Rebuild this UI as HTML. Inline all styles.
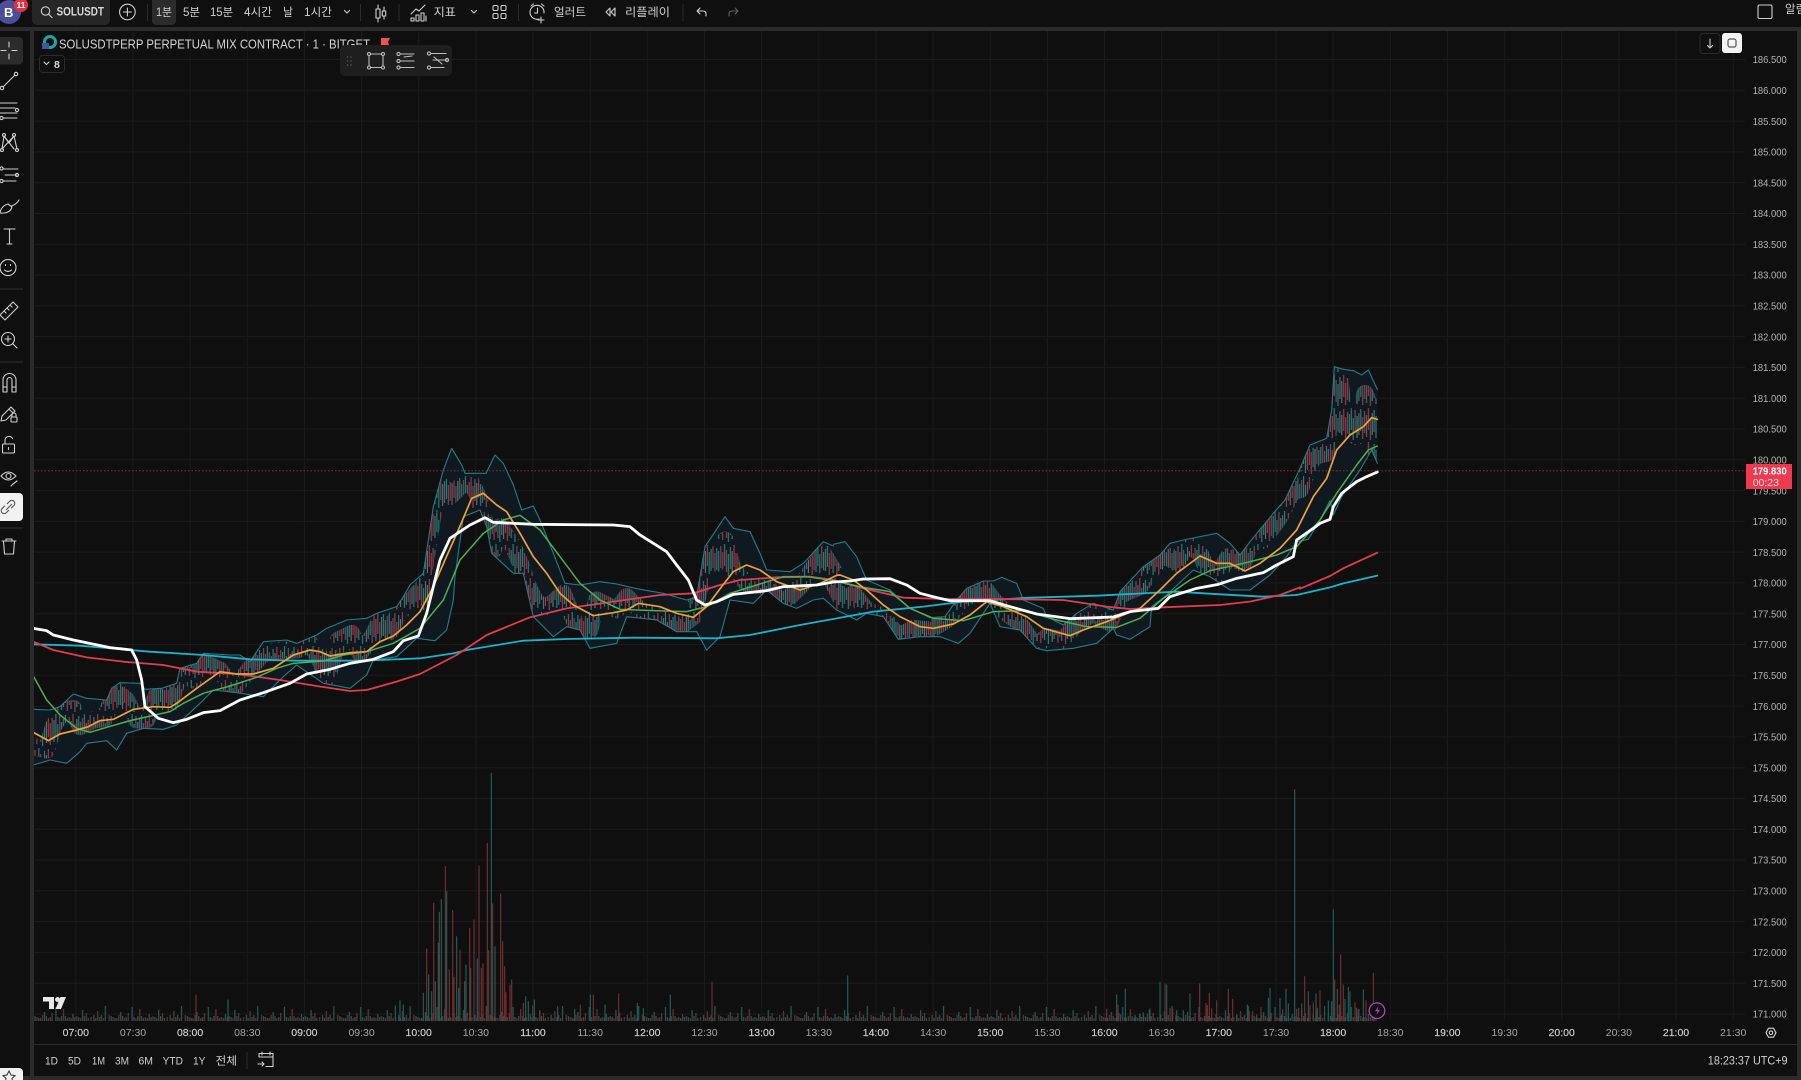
<!DOCTYPE html>
<html lang="ko"><head><meta charset="utf-8"><title>SOLUSDT</title>
<style>
html,body{margin:0;padding:0;background:#0f0f0f;overflow:hidden}
svg{display:block;filter:blur(.3px);font-family:"Liberation Sans","Noto Sans CJK KR",sans-serif}
.t{fill:#d0d0d0;font-size:11.5px}
.b{fill:#d8d8d8;font-size:11.5px;font-weight:bold}
.p{fill:#b4b4b4;font-size:10.5px}
.h{fill:#cfcfcf;stroke:#cfcfcf;stroke-width:.15px;font-size:10.5px;text-anchor:middle}
.m{fill:#a4a4a4;font-size:10.5px;text-anchor:middle}
.i{fill:none;stroke:#cfcfcf;stroke-width:1.1;stroke-linecap:round;stroke-linejoin:round}
.d{stroke:#2b2b2b;stroke-width:1}
.l polyline,.l path{fill:none;vector-effect:non-scaling-stroke;stroke-linejoin:round;stroke-linecap:round}
</style></head><body>
<svg xmlns="http://www.w3.org/2000/svg" width="1801" height="1080" viewBox="0 0 1801 1080">
<defs>
<clipPath id="band">
<polygon transform="translate(30 600) scale(.33333)" points="10,328 60,330 90,320 130,282 170,295 230,300 245,265 270,248 330,250 345,268 395,265 440,250 450,205 500,190 520,160 600,165 630,165 660,185 700,125 770,120 800,130 860,105 890,85 950,60 1010,55 1040,40 1100,20 1120,-10 1180,-80 1210,-280 1240,-390 1265,-455 1272,-448 1272,0 1250,90 1215,122 1160,115 1100,170 1030,180 1010,225 960,265 880,250 800,195 760,230 700,290 620,278 550,270 510,310 440,375 400,388 340,385 290,400 260,450 230,422 170,430 150,455 110,490 60,480 10,495"/>
<polygon transform="translate(400 430) scale(.33333)" points="160,60 185,105 195,130 240,130 258,130 285,75 310,100 340,165 365,240 400,228 420,270 460,370 495,460 540,465 600,455 650,462 720,478 790,490 860,510 890,500 915,350 975,260 1000,295 1050,305 1080,370 1100,420 1170,425 1210,400 1270,335 1302,348 1302,532 1270,505 1240,510 1190,535 1150,520 1100,480 1060,520 990,510 960,620 920,660 890,605 830,605 770,570 680,560 650,640 570,655 540,600 500,590 460,620 400,560 370,430 340,430 275,370 260,290 240,240 190,260 165,440 160,510"/>
<polygon transform="translate(830 500) scale(.33333)" points="0,135 45,125 80,170 110,240 180,270 240,325 300,353 345,350 380,300 410,265 460,243 490,243 515,232 560,250 580,300 640,325 650,350 700,375 740,340 790,310 850,330 870,275 940,200 990,165 1020,130 1060,120 1160,100 1200,130 1230,165 1260,125 1330,40 1365,0 1412,-95 1412,120 1400,125 1370,170 1320,225 1260,270 1200,270 1140,230 1090,210 1010,285 965,320 960,380 900,418 860,405 850,385 800,430 730,445 650,452 620,445 570,390 510,380 480,310 420,400 385,430 330,410 270,410 205,418 160,350 110,340 80,360 50,345 20,330 0,322"/>
<polygon transform="translate(1300 350) scale(.33333)" points="0,355 30,285 80,265 95,180 103,50 130,58 160,62 185,75 205,60 232,118 232,340 215,300 180,360 125,440 100,495 90,452 60,510 25,568 0,572"/>
</clipPath>
<pattern id="volbase" patternUnits="userSpaceOnUse" x="34" y="997" width="76.2" height="24">
<path fill="none" stroke="#1d5e58" stroke-width="1.2" d="M1 24V19M6.700 24V21M10.500 24V15M16.200 24V20M21.900 24V10M27.600 24V19M33.300 24V21M39 24V17M44.700 24V20M48.500 24V13M54.200 24V21M59.900 24V18M65.600 24V20M71.300 24V9"/>
<path fill="none" stroke="#6e2f31" stroke-width="1.2" d="M2.900 24V20M8.600 24V18M14.300 24V21M18.100 24V16M25.700 24V21M29.500 24V12M35.200 24V20M42.800 24V19M46.600 24V21M52.300 24V16M57 24V20M63.700 24V14M69.400 24V21M75.100 24V18"/>
<path fill="none" stroke="#454a4a" stroke-width="1.2" d="M4.800 24V21M12.400 24V19M23.800 24V20M31.400 24V19M37.100 24V21M40.900 24V20M50.400 24V19M61.800 24V21M67.500 24V18"/>
</pattern>
<!-- vertical candle stripes -->
<pattern id="stripes" patternUnits="userSpaceOnUse" x="34" y="340" width="76.2" height="34">
<path fill="none" stroke="#a63a4c" stroke-width="1.100" d="M1 2V24M2.900 8V30M6.700 6V28M14.300 1V23M16.200 9V31M18.100 4V26M25.700 2V24M33.300 9V31M35.200 3V25M39 0V22M40.900 10V32M48.500 4V26M54.200 6V28M56.100 1V23M58 10V32M63.700 0V22M69.400 2V24M71.300 9V31"/>
<path fill="none" stroke="#20877f" stroke-width="1.100" d="M4.800 0V22M8.600 10V32M10.500 3V25M20 6V28M21.900 0V22M23.800 10V32M29.500 5V27M31.400 1V23M37.100 7V29M44.700 2V24M46.600 8V30M50.400 0V22M52.300 9V31M59.900 3V25M65.600 8V30M67.500 5V27M73.200 4V26M75.100 7V29"/>
<path fill="none" stroke="#6d7374" stroke-width="1.100" d="M12.400 7V29M27.600 8V30M42.800 5V27M61.800 7V29"/>
</pattern>
<mask id="ribbon" maskUnits="userSpaceOnUse" x="30" y="340" width="1360" height="440">
<g class="l" stroke="#fff" stroke-width="17">
<polyline transform="translate(30 600) scale(.33333)" points="10,440 50,450 70,380 100,330 130,325 150,380 190,360 225,355 255,270 290,300 320,360 350,360 380,285 420,315 450,215 490,240 515,185 570,210 610,270 660,205 700,160 760,150 800,150 840,130 870,180 890,240 925,120 965,100 990,160 1030,105 1050,60 1080,95 1110,30 1160,10"/>
<polyline transform="translate(400 430) scale(.33333)" points="0,520 40,480 60,520 80,370 100,250 130,170 150,200 180,170 210,150 235,200 260,300 280,360 300,290 340,350 365,410 385,470 410,520 445,530 490,490 530,590 570,600 590,510 650,540 680,500 720,540 800,570 840,590 880,560 900,470 925,370 950,400 975,330 1000,420 1040,460 1100,470 1150,520 1200,470 1270,370 1300,420"/>
<polyline transform="translate(830 500) scale(.33333)" points="10,250 40,310 70,280 110,330 160,350 205,410 250,385 300,390 350,360 400,300 460,260 490,300 530,340 570,370 615,440 650,410 700,420 740,370 790,340 840,370 870,285 930,260 1000,160 1040,190 1070,130 1110,160 1150,250 1195,170 1240,190 1260,130 1300,120 1350,50 1390,-30"/>
<polyline transform="translate(1300 350) scale(.33333)" points="0,420 40,320 80,310 100,60 120,90 135,230 170,260 195,130 215,180 232,340"/>
</g>
</mask>
</defs>
<rect width="1801" height="1080" fill="#0f0f0f"/>
<path stroke="#1b1b1b" stroke-width="1" fill="none" d="M34 59.500H1745M34 90.300H1745M34 121.100H1745M34 151.900H1745M34 182.700H1745M34 213.500H1745M34 244.200H1745M34 275H1745M34 305.800H1745M34 336.600H1745M34 367.400H1745M34 398.200H1745M34 429H1745M34 459.800H1745M34 490.600H1745M34 521.400H1745M34 552.100H1745M34 582.900H1745M34 613.700H1745M34 644.500H1745M34 675.300H1745M34 706.100H1745M34 736.900H1745M34 767.700H1745M34 798.500H1745M34 829.300H1745M34 860H1745M34 890.800H1745M34 921.600H1745M34 952.400H1745M34 983.200H1745M34 1014H1745M75.800 31V1020M133 31V1020M190.100 31V1020M247.300 31V1020M304.400 31V1020M361.600 31V1020M418.700 31V1020M475.900 31V1020M533 31V1020M590.200 31V1020M647.300 31V1020M704.500 31V1020M761.600 31V1020M818.800 31V1020M875.900 31V1020M933.100 31V1020M990.200 31V1020M1047.400 31V1020M1104.500 31V1020M1161.700 31V1020M1218.800 31V1020M1276 31V1020M1333.100 31V1020M1390.300 31V1020M1447.400 31V1020M1504.600 31V1020M1561.700 31V1020M1618.900 31V1020M1676 31V1020M1733.200 31V1020"/>

<!-- band fill -->
<rect x="30" y="340" width="1360" height="440" fill="#111920" clip-path="url(#band)"/>

<!-- volume -->
<rect x="34" y="997" width="1343" height="24" fill="url(#volbase)"/>
<g class="l">
<path transform="translate(380 760) scale(.33333)" stroke="#1d5e58" stroke-width="1.2" d="M334 782V40M200 782V395M184 782V418M230 782V530M345 782V560M258 782V615M292 782V597M146 782V645M130 782V700M155 782V695M236 782V685M631 782V705M871 782V705M437 782V710M463 782V720M772 782V730M675 782V735M533 782V740M60 782V722M46 782V738M70 782V735M445 782V725M584 782V748M790 782V745"/>
<path transform="translate(380 760) scale(.33333)" stroke="#6e2f31" stroke-width="1.2" d="M322 782V250M297 782V318M196 782V320M161 782V430M218 782V452M362 782V402M338 782V432M282 782V480M269 782V505M140 782V567M240 782V570M368 782V545M304 782V625M309 782V612M326 782V572M208 782V630M222 782V652M374 782V620M395 782V660M390 782V675M378 782V698M640 782V705M716 782V702M601 782V735M458 782V738M430 782V730M480 782V755"/>
<path transform="translate(380 760) scale(.33333)" stroke="#454a4a" stroke-width="1.2" d="M178 782V457M175 782V550M272 782V625M166 782V665M254 782V665"/>
<path transform="translate(1100 940) scale(.33333)" stroke="#1d5e58" stroke-width="1.200" d="M584 243V-450M700 243V-90M180 243V127M200 243V135M76 243V148M50 243V165M270 243V162M510 243V145M505 243V175M540 243V175M558 243V148M565 243V192M625 243V155M605 243V192M648 243V162M685 243V183M695 243V185M712 243V148M735 243V178M745 243V142M750 243V155M790 243V150M442 243V195M150 243V207M130 243V218M120 243V222M105 243V226M230 243V212M250 243V212M410 243V225M470 243V225"/>
<path transform="translate(1100 940) scale(.33333)" stroke="#6e2f31" stroke-width="1.200" d="M722 243V45M614 243V110M704 243V120M820 243V100M385 243V148M398 243V178M299 243V132M328 243V160M318 243V190M350 243V182M195 243V132M20 243V208M54 243V195M730 243V135M718 243V195M660 243V152M640 243V188M630 243V197M596 243V205M590 243V208M765 243V188M798 243V182M483 243V202M525 243V222M458 243V215M448 243V215M210 243V205M218 243V207M335 243V207M322 243V197M142 243V222"/>
<path transform="translate(1100 940) scale(.33333)" stroke="#454a4a" stroke-width="1.200" d="M770 243V205M775 243V210M652 243V205M62 243V225M545 243V225"/>
<path stroke="#1d5e58" stroke-width="1.200" d="M847.700 1021V976M228 1021V1000"/>
<path stroke="#6e2f31" stroke-width="1.200" d="M196 1021V995M712 1021V982"/>
</g>

<!-- bollinger lines -->
<g class="l" stroke="#1c7f8d" stroke-width="1.100">
<polyline transform="translate(30 600) scale(.33333)" points="10,328 60,330 90,320 130,282 170,295 230,300 245,265 270,248 330,250 345,268 395,265 440,250 450,205 500,190 520,160 600,165 630,165 660,185 700,125 770,120 800,130 860,105 890,85 950,60 1010,55 1040,40 1100,20"/>
<polyline transform="translate(400 430) scale(.33333)" points="-10,530 10,500 30,465 70,430 100,230 130,120 155,55 185,105 195,130 240,130 258,130 285,75 310,100 340,165 365,240 400,228 420,270 460,370 495,460 540,465 600,455 650,462 720,478 790,490 860,510 890,500 915,350 975,260 1000,295 1050,305 1080,370 1100,420 1170,425 1210,400 1270,335 1300,348"/>
<polyline transform="translate(830 500) scale(.33333)" points="10,133 45,125 80,170 110,240 180,270 240,325 300,353 345,350 380,300 410,265 460,243 490,243 515,232 560,250 580,300 640,325 650,350 700,375 740,340 790,310 850,330 870,275 940,200 990,165 1020,130 1060,120 1160,100 1200,130 1230,165 1260,125 1330,40 1365,0"/>
<polyline transform="translate(1300 350) scale(.33333)" points="-45,450 0,355 30,285 80,265 95,180 103,50 130,58 160,62 185,75 205,60 232,118"/>
<polyline transform="translate(30 600) scale(.33333)" points="10,495 60,480 110,490 150,455 170,430 230,422 260,450 290,400 340,385 400,388 440,375 510,310 550,270 620,278 700,290 760,230 800,195 880,250 960,265 1010,225 1030,180 1100,170 1160,115 1215,122 1250,90 1270,0"/>
<polyline transform="translate(400 430) scale(.33333)" points="160,510 165,440 190,260 240,240 260,290 275,370 340,430 370,430 400,560 460,620 500,590 540,600 570,655 650,640 680,560 770,570 830,605 890,605 920,660 960,620 990,510 1060,520 1100,480 1150,520 1190,535 1240,510 1270,505 1310,540"/>
<polyline transform="translate(830 500) scale(.33333)" points="20,330 50,345 80,360 110,340 160,350 205,418 270,410 330,410 385,430 420,400 480,310 510,380 570,390 620,445 650,452 730,445 800,430 850,385 860,405 900,418 960,380 965,320 1010,285 1090,210 1140,230 1200,270 1260,270 1320,225 1370,170 1400,125"/>
<polyline transform="translate(1300 350) scale(.33333)" points="-10,575 25,568 60,510 90,452 100,495 125,440 180,360 215,300 232,340"/>
</g>

<!-- candles: vertical stripes masked by the price-path ribbon -->
<g clip-path="url(#band)">
<rect x="34" y="340" width="1343" height="440" fill="url(#stripes)" mask="url(#ribbon)"/>
</g>

<line x1="34" y1="470.700" x2="1746" y2="470.700" stroke="#8f2a36" stroke-width="1" stroke-dasharray="1.500 2"/>

<!-- cyan MA -->
<g class="l" stroke="#18b4cc" stroke-width="1.800">
<polyline transform="translate(30 600) scale(.33333)" points="10,133 150,137 360,155 520,165 660,178 800,182 1000,182 1170,175 1270,160"/>
<polyline transform="translate(400 430) scale(.33333)" points="160,670 200,660 370,632 500,627 700,623 950,625 1050,615 1200,585 1300,567"/>
<polyline transform="translate(830 500) scale(.33333)" points="10,357 130,335 280,320 400,305 600,293 800,287 1040,275 1170,283 1300,290 1400,285"/>
<polyline transform="translate(1300 350) scale(.33333)" points="-10,735 90,712 130,700 232,677"/>
</g>
<!-- red MA -->
<g class="l" stroke="#e23c4e" stroke-width="1.800">
<polyline transform="translate(30 600) scale(.33333)" points="10,125 70,150 170,172 280,185 400,195 500,215 620,222 750,240 860,258 960,273 1010,270 1100,245 1170,222 1280,165"/>
<polyline transform="translate(400 430) scale(.33333)" points="170,675 260,615 390,562 500,535 640,515 780,495 880,490 960,465 1020,450 1130,442 1230,440 1300,450"/>
<polyline transform="translate(830 500) scale(.33333)" points="10,240 100,265 220,293 340,297 500,297 700,300 830,320 900,327 1000,322 1170,315 1260,305 1350,285 1410,262"/>
<polyline transform="translate(1300 350) scale(.33333)" points="0,716 90,678 130,655 232,608"/>
</g>
<!-- green MA -->
<g class="l" stroke="#4caf50" stroke-width="1.500">
<polyline transform="translate(30 600) scale(.33333)" points="10,228 50,300 90,345 140,385 180,397 220,385 300,362 420,335 460,310 520,280 600,258 680,232 740,205 790,190 880,183 940,165 1010,155 1090,130 1170,85 1240,0"/>
<polyline transform="translate(400 430) scale(.33333)" points="130,510 180,390 250,310 310,270 360,256 420,300 480,380 540,460 600,510 660,538 760,542 860,545 920,530 990,490 1070,465 1150,440 1220,440"/>
<polyline transform="translate(830 500) scale(.33333)" points="-70,230 0,240 100,262 180,275 240,325 310,355 400,362 490,335 580,332 680,360 770,380 860,382 930,355 1000,295 1080,240 1140,212 1240,190 1340,165 1400,140"/>
<polyline transform="translate(1300 350) scale(.33333)" points="-10,590 60,510 110,430 170,345 205,300 232,288"/>
</g>
<!-- orange -->
<g class="l" stroke="#f0a030" stroke-width="1.700">
<polyline transform="translate(30 600) scale(.33333)" points="10,397 55,422 90,402 140,390 175,380 210,362 250,358 310,328 370,320 420,322 440,310 500,265 570,215 620,222 670,222 730,205 790,165 840,150 870,155 900,168 960,158 1010,155 1050,125 1090,108 1130,75 1170,35"/>
<polyline transform="translate(400 430) scale(.33333)" points="60,545 100,470 135,390 175,300 215,205 250,190 290,225 320,245 360,310 400,380 440,430 480,490 520,525 580,557 640,548 680,540 715,520 780,530 830,550 880,562 920,530 965,470 1000,425 1040,405 1080,420 1130,455 1200,480 1260,460 1310,436"/>
<polyline transform="translate(830 500) scale(.33333)" points="20,226 30,225 70,240 110,270 160,315 210,350 270,380 310,385 370,372 420,345 470,305 520,320 590,350 640,385 720,407 760,390 830,365 880,345 930,325 990,270 1040,220 1110,168 1160,190 1200,190 1245,213 1290,190 1350,145 1400,90 1445,0"/>
<polyline transform="translate(1300 350) scale(.33333)" points="35,450 40,440 80,385 110,300 150,255 190,230 215,203 232,208"/>
</g>
<!-- white -->
<g class="l" stroke="#ffffff" stroke-width="2.800">
<polyline transform="translate(30 600) scale(.33333)" points="10,85 50,92 70,105 130,120 240,143 305,150 320,180 335,240 345,320 385,355 430,368 470,358 520,338 570,332 630,300 700,278 780,250 830,222 900,208 960,190 1030,178 1090,155 1120,122 1165,108 1190,40"/>
<polyline transform="translate(400 430) scale(.33333)" points="80,550 95,490 120,390 150,325 210,285 255,263 280,277 400,283 640,285 690,290 720,315 800,365 830,405 865,450 890,510 915,525 950,515 1000,493 1100,482 1150,470 1250,465 1300,456"/>
<polyline transform="translate(830 500) scale(.33333)" points="10,246 60,243 100,237 180,236 230,255 270,280 320,293 360,302 480,302 540,320 620,342 720,356 850,351 900,335 985,325 1020,290 1100,265 1165,253 1220,235 1300,218 1340,195 1390,170 1400,120"/>
<polyline transform="translate(1300 350) scale(.33333)" points="-10,570 40,535 60,520 90,508 100,470 125,430 170,395 200,380 232,366"/>
</g>

<!-- top bar -->
<rect x="0" y="0" width="1801" height="27" fill="#0f0f0f"/>
<rect x="0" y="27" width="1801" height="4" fill="#2b2b2b"/>
<circle cx="9" cy="12" r="12" fill="#4a4f9c"/>
<text x="4" y="17" fill="#fff" font-size="13" font-weight="bold">B</text>
<circle cx="21" cy="5" r="7" fill="#e8303c"/>
<text x="21" y="8" fill="#fff" font-size="8.500" font-weight="bold" text-anchor="middle">11</text>
<rect x="32" y="-4" width="78" height="29" rx="5" fill="#262626"/>
<circle cx="45.500" cy="11" r="4.200" class="i"/><path d="M48.600 14.200l3.400 3.400" class="i"/>
<text x="56.500" y="15.500" class="b" font-size="11" textLength="47.500" lengthAdjust="spacingAndGlyphs">SOLUSDT</text>
<circle cx="127.400" cy="12" r="7.800" class="i"/><path d="M127.400 8v8M123.400 12h8" class="i"/>
<line x1="147.500" y1="4" x2="147.500" y2="21" class="d"/>
<rect x="152" y="-4" width="24" height="29" rx="4" fill="#2b2b2b"/>
<text x="156" y="16" class="t" textLength="16" lengthAdjust="spacingAndGlyphs">1분</text>
<text x="183" y="16" class="t" textLength="17" lengthAdjust="spacingAndGlyphs">5분</text>
<text x="210" y="16" class="t" textLength="23" lengthAdjust="spacingAndGlyphs">15분</text>
<text x="244" y="16" class="t" textLength="28" lengthAdjust="spacingAndGlyphs">4시간</text>
<text x="283" y="16" class="t" textLength="10" lengthAdjust="spacingAndGlyphs">날</text>
<text x="304" y="16" class="t" textLength="28" lengthAdjust="spacingAndGlyphs">1시간</text>
<path d="M344.500 10.500l2.500 2.500 2.500-2.500" class="i"/>
<line x1="360.500" y1="4" x2="360.500" y2="21" class="d"/>
<path d="M378 5v4M378 18v4M376 9h4v9h-4zM384 7v4M384 16v3M382.300 11h3.400v5h-3.400z" class="i"/>
<line x1="399" y1="4" x2="399" y2="21" class="d"/>
<path d="M411 14l5-5 3 2 6-6M411 21v-3h3v3zM416 21v-6h3v6zM421 21v-8h3v8zM426 21v-5" class="i" stroke-width="1"/>
<text x="433.600" y="16" class="t" textLength="22.400" lengthAdjust="spacingAndGlyphs">지표</text>
<path d="M471.500 10.500l2.500 2.500 2.500-2.500" class="i"/>
<rect x="493" y="5.500" width="5" height="5" rx="1.300" class="i"/><rect x="501" y="5.500" width="5" height="5" rx="1.300" class="i"/><rect x="493" y="13.500" width="5" height="5" rx="1.300" class="i"/><rect x="501" y="13.500" width="5" height="5" rx="1.300" class="i"/>
<line x1="518.500" y1="4" x2="518.500" y2="21" class="d"/>
<path d="M539 19a7 7 0 1 1 5-6M537.500 8v5h-3M531 6l2.500-2M544 6l-2.500-2M541 17v6M538 20h6" class="i"/>
<text x="554" y="16" class="t" textLength="32" lengthAdjust="spacingAndGlyphs">얼러트</text>
<path d="M610 8l-4 4 4 4zM615 8l-4 4 4 4z" class="i"/>
<text x="625" y="16" class="t" textLength="45" lengthAdjust="spacingAndGlyphs">리플레이</text>
<line x1="683" y1="4" x2="683" y2="21" class="d"/>
<path d="M700 8l-3 3 3 3M697 11h6q3 0 3 3v2" class="i"/>
<path d="M735 8l3 3-3 3M738 11h-6q-3 0-3 3v2" class="i" style="stroke:#5f5f5f"/>
<rect x="1758" y="5" width="14" height="13.500" rx="1.500" class="i"/>
<text x="1785" y="13" class="t">알림</text>

<!-- left toolbar -->
<rect x="0" y="31" width="30" height="1049" fill="#0f0f0f"/>
<rect x="30" y="31" width="4" height="1049" fill="#2b2b2b"/>
<rect x="-4" y="37" width="27" height="27.500" rx="4" fill="#2b2b2b"/>
<path d="M9 42v5M9 54v5M1 50.500h5M12 50.500h5" class="i"/>
<g class="i">
<path d="M3 87l12-12"/><circle cx="2" cy="88" r="1.700"/><circle cx="16" cy="74" r="1.700"/>
<path d="M0 103h17M0 108h15M0 113h17M3 118h14"/><circle cx="17" cy="110" r="1.600"/><circle cx="1.500" cy="118" r="1.600"/>
<path d="M2 149l2-13 5 7 5-7 3 13M4 136l10 13M14 136L2 149"/><circle cx="4" cy="135" r="1.500"/><circle cx="14" cy="135" r="1.500"/><circle cx="2" cy="150" r="1.500"/><circle cx="17" cy="150" r="1.500"/>
<path d="M3 169h15M5 175h12M3 181h13"/><circle cx="1.500" cy="168.500" r="1.600"/><circle cx="17" cy="175" r="1.600"/><circle cx="1.500" cy="181" r="1.600"/>
<path d="M0 213q1-7 8-9l4 3q-2 7-12 6zM11 206q5-1 8-6"/>
<path d="M4 229h11M9.500 229v15M7 244h5"/>
<circle cx="8" cy="267.600" r="8"/><path d="M4.500 270q3.500 3 7 0M5.500 264.500v1M10.500 264.500v1"/>
<path d="M0 315L13 302l5 5L5 320zM4 311l2 2M7 308l2 2M10 305l2 2"/>
<circle cx="8" cy="339" r="6.500"/><path d="M13 344l4 4M8 336v6M5 339h6"/>
<path d="M3 392v-12a6.500 6.500 0 0 1 13 0v12h-4v-12a2.500 2.500 0 0 0-5 0v12zM3 387h4M12 387h4"/>
<path d="M1 421l1-5 9-9 4 4-9 9zM9 409l4 4"/><rect x="11" y="417" width="6" height="5" rx="1"/><path d="M12 417v-2a2 2 0 0 1 4 0v2"/>
<rect x="2.500" y="444" width="12" height="9" rx="1"/><path d="M5 444v-4a4 4 0 0 1 7.500-1.500M8.500 447.500v2"/>
<path d="M1 476q7-8 15 0-8 8-15 0z"/><circle cx="8.500" cy="476" r="2.500"/><path d="M13 484l4-3M11 486l2-2"/>
</g>
<rect x="-4" y="493" width="27" height="28" rx="4" fill="#f2f2f2"/>
<path d="M7 504l3-3a3 3 0 0 1 4.200 4.200l-3 3M9 510l-3 3a3 3 0 0 1-4.200-4.200l3-3M6 510l6-6" fill="none" stroke="#555" stroke-width="1.100"/>
<path d="M0 289h23M0 362h23M0 528h23" stroke="#2f2f2f" stroke-width="1"/>
<path d="M2 541h14M6 541v-2h6v2M3.500 541l1 13h9l1-13" class="i"/>

<!-- legend -->
<circle cx="50" cy="42" r="5.500" fill="none" stroke="#1aa6a6" stroke-width="3"/>
<rect x="42" y="43" width="7" height="6" fill="#3a5a9a"/>
<text x="59" y="48.500" fill="#d4d4d4" font-size="12.500" textLength="311" lengthAdjust="spacingAndGlyphs">SOLUSDTPERP PERPETUAL MIX CONTRACT · 1 · BITGET</text>
<path d="M381 38h9l-2 4 1 3h-8z" fill="#f0524f"/>
<rect x="39.500" y="55.500" width="25" height="17" rx="3" fill="#0f0f0f" stroke="#2b2b2b"/>
<path d="M44 62l2.500 2.500L49 62" class="i"/>
<text x="54" y="68" class="b" style="font-size:10.500px">8</text>
<rect x="340" y="45" width="112" height="31" rx="5" fill="#1e1e1e"/>
<g fill="#555"><circle cx="347.500" cy="57" r=".8"/><circle cx="351" cy="57" r=".8"/><circle cx="347.500" cy="61" r=".8"/><circle cx="351" cy="61" r=".8"/><circle cx="347.500" cy="65" r=".8"/><circle cx="351" cy="65" r=".8"/></g>
<g class="i" style="stroke:#bdbdbd">
<rect x="369" y="54" width="14" height="13.500"/><circle cx="369" cy="54" r="1.500" fill="#1e1e1e"/><circle cx="383" cy="54" r="1.500" fill="#1e1e1e"/><circle cx="369" cy="67.500" r="1.500" fill="#1e1e1e"/><circle cx="383" cy="67.500" r="1.500" fill="#1e1e1e"/>
<path d="M400 54h14M400 61h14M400 67.500h14M404 57l8-1"/><circle cx="398.500" cy="54" r="1.600"/><circle cx="398.500" cy="61" r="1.600"/><circle cx="398.500" cy="67.500" r="1.600"/>
<path d="M431 53.500h15M433 60h14M431 67.500h13M434 57l8 7"/><circle cx="429" cy="53.500" r="1.600"/><circle cx="447" cy="60" r="1.600"/><circle cx="429" cy="67.500" r="1.600"/>
</g>
<rect x="1700" y="33.500" width="20" height="20" rx="3" fill="#0f0f0f" stroke="#2b2b2b"/>
<path d="M1710 39v9M1707.500 45.500l2.500 2.500 2.500-2.500" class="i"/>
<rect x="1722" y="33" width="20" height="20" rx="3" fill="#f4f4f4"/>
<path d="M1728 41a2 2 0 0 1 2-2h4a2 2 0 0 1 2 2v4a2 2 0 0 1-2 2h-4a2 2 0 0 1-2-2z" fill="none" stroke="#555" stroke-width="1.200"/>

<!-- price axis -->
<text class="p" x="1752.700" y="63.200" textLength="34" lengthAdjust="spacingAndGlyphs">186.500</text>
<text class="p" x="1752.700" y="94" textLength="34" lengthAdjust="spacingAndGlyphs">186.000</text>
<text class="p" x="1752.700" y="124.800" textLength="34" lengthAdjust="spacingAndGlyphs">185.500</text>
<text class="p" x="1752.700" y="155.600" textLength="34" lengthAdjust="spacingAndGlyphs">185.000</text>
<text class="p" x="1752.700" y="186.400" textLength="34" lengthAdjust="spacingAndGlyphs">184.500</text>
<text class="p" x="1752.700" y="217.200" textLength="34" lengthAdjust="spacingAndGlyphs">184.000</text>
<text class="p" x="1752.700" y="247.900" textLength="34" lengthAdjust="spacingAndGlyphs">183.500</text>
<text class="p" x="1752.700" y="278.700" textLength="34" lengthAdjust="spacingAndGlyphs">183.000</text>
<text class="p" x="1752.700" y="309.500" textLength="34" lengthAdjust="spacingAndGlyphs">182.500</text>
<text class="p" x="1752.700" y="340.300" textLength="34" lengthAdjust="spacingAndGlyphs">182.000</text>
<text class="p" x="1752.700" y="371.100" textLength="34" lengthAdjust="spacingAndGlyphs">181.500</text>
<text class="p" x="1752.700" y="401.900" textLength="34" lengthAdjust="spacingAndGlyphs">181.000</text>
<text class="p" x="1752.700" y="432.700" textLength="34" lengthAdjust="spacingAndGlyphs">180.500</text>
<text class="p" x="1752.700" y="463.500" textLength="34" lengthAdjust="spacingAndGlyphs">180.000</text>
<text class="p" x="1752.700" y="494.300" textLength="34" lengthAdjust="spacingAndGlyphs">179.500</text>
<text class="p" x="1752.700" y="525.100" textLength="34" lengthAdjust="spacingAndGlyphs">179.000</text>
<text class="p" x="1752.700" y="555.800" textLength="34" lengthAdjust="spacingAndGlyphs">178.500</text>
<text class="p" x="1752.700" y="586.600" textLength="34" lengthAdjust="spacingAndGlyphs">178.000</text>
<text class="p" x="1752.700" y="617.400" textLength="34" lengthAdjust="spacingAndGlyphs">177.500</text>
<text class="p" x="1752.700" y="648.200" textLength="34" lengthAdjust="spacingAndGlyphs">177.000</text>
<text class="p" x="1752.700" y="679" textLength="34" lengthAdjust="spacingAndGlyphs">176.500</text>
<text class="p" x="1752.700" y="709.800" textLength="34" lengthAdjust="spacingAndGlyphs">176.000</text>
<text class="p" x="1752.700" y="740.600" textLength="34" lengthAdjust="spacingAndGlyphs">175.500</text>
<text class="p" x="1752.700" y="771.400" textLength="34" lengthAdjust="spacingAndGlyphs">175.000</text>
<text class="p" x="1752.700" y="802.200" textLength="34" lengthAdjust="spacingAndGlyphs">174.500</text>
<text class="p" x="1752.700" y="833" textLength="34" lengthAdjust="spacingAndGlyphs">174.000</text>
<text class="p" x="1752.700" y="863.700" textLength="34" lengthAdjust="spacingAndGlyphs">173.500</text>
<text class="p" x="1752.700" y="894.500" textLength="34" lengthAdjust="spacingAndGlyphs">173.000</text>
<text class="p" x="1752.700" y="925.300" textLength="34" lengthAdjust="spacingAndGlyphs">172.500</text>
<text class="p" x="1752.700" y="956.100" textLength="34" lengthAdjust="spacingAndGlyphs">172.000</text>
<text class="p" x="1752.700" y="986.900" textLength="34" lengthAdjust="spacingAndGlyphs">171.500</text>
<text class="p" x="1752.700" y="1017.700" textLength="34" lengthAdjust="spacingAndGlyphs">171.000</text>
<rect x="1746" y="464" width="46" height="25" fill="#ee3a50"/>
<text x="1752.700" y="474.600" fill="#fff" font-size="10.500" font-weight="bold" textLength="34" lengthAdjust="spacingAndGlyphs">179.830</text>
<text x="1752.700" y="486" fill="#ffd9dd" font-size="10.500">00:23</text>

<!-- time axis -->
<text class="h" x="75.800" y="1036">07:00</text><text class="m" x="133" y="1036">07:30</text>
<text class="h" x="190.100" y="1036">08:00</text><text class="m" x="247.300" y="1036">08:30</text>
<text class="h" x="304.400" y="1036">09:00</text><text class="m" x="361.600" y="1036">09:30</text>
<text class="h" x="418.700" y="1036">10:00</text><text class="m" x="475.900" y="1036">10:30</text>
<text class="h" x="533" y="1036">11:00</text><text class="m" x="590.200" y="1036">11:30</text>
<text class="h" x="647.300" y="1036">12:00</text><text class="m" x="704.500" y="1036">12:30</text>
<text class="h" x="761.600" y="1036">13:00</text><text class="m" x="818.800" y="1036">13:30</text>
<text class="h" x="875.900" y="1036">14:00</text><text class="m" x="933.100" y="1036">14:30</text>
<text class="h" x="990.200" y="1036">15:00</text><text class="m" x="1047.400" y="1036">15:30</text>
<text class="h" x="1104.500" y="1036">16:00</text><text class="m" x="1161.700" y="1036">16:30</text>
<text class="h" x="1218.800" y="1036">17:00</text><text class="m" x="1276" y="1036">17:30</text>
<text class="h" x="1333.100" y="1036">18:00</text><text class="m" x="1390.300" y="1036">18:30</text>
<text class="h" x="1447.400" y="1036">19:00</text><text class="m" x="1504.600" y="1036">19:30</text>
<text class="h" x="1561.700" y="1036">20:00</text><text class="m" x="1618.900" y="1036">20:30</text>
<text class="h" x="1676" y="1036">21:00</text><text class="m" x="1733.200" y="1036">21:30</text>
<path d="M1766 1032.700l2.500-4.500h5l2.500 4.500-2.500 4.500h-5z" class="i"/><circle cx="1771" cy="1032.700" r="1.800" class="i"/>

<!-- purple bolt -->
<circle cx="1377" cy="1010.700" r="7.800" fill="#0f0f0f" stroke="#ab47bc" stroke-width="1.300"/>
<path d="M1378.500 1006l-3.500 5.300h2.600l-1.200 4 3.600-5.500h-2.600z" fill="#ab47bc"/>

<!-- TV logo -->
<path d="M43 997h11v12h-5v-7.500h-6zM66 997l-5 12h-5.500l5-12z" fill="#e8e8e8"/>
<circle cx="57.500" cy="999.500" r="2.500" fill="#e8e8e8"/>

<!-- bottom bar -->
<rect x="34" y="1044" width="1763" height="1" fill="#2b2b2b"/>
<g class="t" style="font-size:11px">
<text x="45" y="1064.500" textLength="13" lengthAdjust="spacingAndGlyphs">1D</text>
<text x="68" y="1064.500" textLength="13" lengthAdjust="spacingAndGlyphs">5D</text>
<text x="92" y="1064.500" textLength="13" lengthAdjust="spacingAndGlyphs">1M</text>
<text x="115" y="1064.500" textLength="14" lengthAdjust="spacingAndGlyphs">3M</text>
<text x="138.500" y="1064.500" textLength="14.500" lengthAdjust="spacingAndGlyphs">6M</text>
<text x="162.600" y="1064.500" textLength="20.400" lengthAdjust="spacingAndGlyphs">YTD</text>
<text x="193" y="1064.500" textLength="12.500" lengthAdjust="spacingAndGlyphs">1Y</text>
<text x="215.500" y="1064.500" textLength="21.500" lengthAdjust="spacingAndGlyphs">전체</text>
</g>
<line x1="247" y1="1052" x2="247" y2="1069" class="d"/>
<path d="M259 1057v-3.500h14v13h-7M259 1057h14M262 1052v3M270 1052v3M258 1064h6M262 1062l2 2-2 2" class="i"/>
<text x="1707.800" y="1064.500" class="t" textLength="79.800" lengthAdjust="spacingAndGlyphs">18:23:37 UTC+9</text>
<rect x="0" y="1076" width="1801" height="4" fill="#2b2b2b"/>
<rect x="1797" y="31" width="4" height="1049" fill="#2b2b2b"/>
<rect x="-4" y="1068" width="27" height="16" rx="4" fill="#f2f2f2"/>
<path d="M9 1071l2 4 4 .6-3 2.800.7 4-3.700-2-3.700 2 .7-4-3-2.800 4-.6z" fill="none" stroke="#333" stroke-width="1"/>
</svg>
</body></html>
